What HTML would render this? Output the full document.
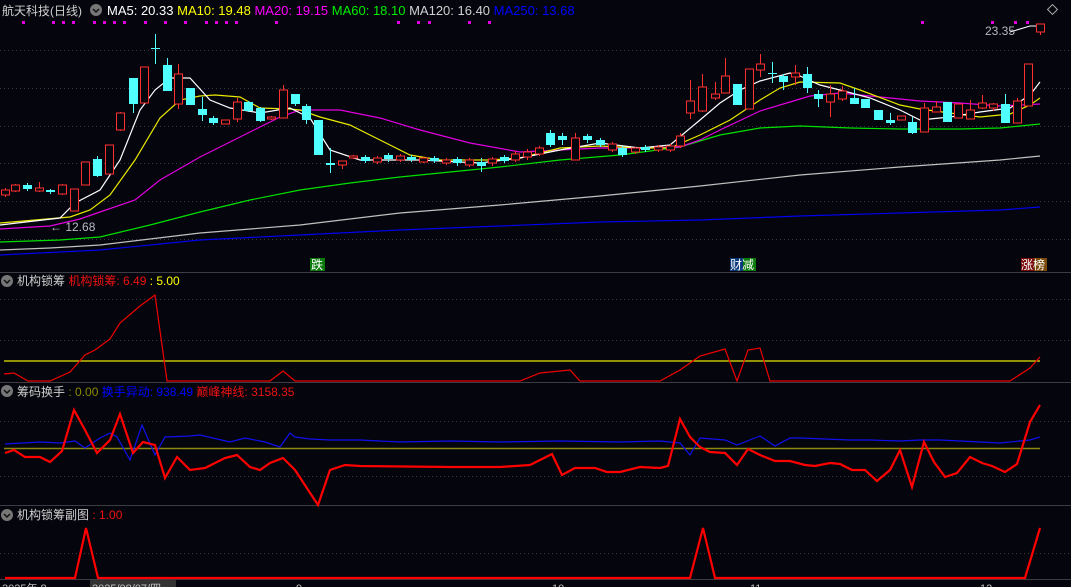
<!DOCTYPE html>
<html><head><meta charset="utf-8"><style>
body{margin:0;background:#05050d;width:1071px;height:587px;overflow:hidden;font-family:"Liberation Sans","Noto Sans CJK SC",sans-serif;}
svg{position:absolute;left:0;top:0}
text{font-family:"Liberation Sans","Noto Sans CJK SC",sans-serif;font-size:12px}
</style></head><body>
<svg id="s" width="1071" height="587" xmlns="http://www.w3.org/2000/svg">
<rect width="1071" height="587" fill="#05050d"/>
<g stroke="#3a3a44" stroke-dasharray="1,3" stroke-width="1">
<line x1="0" y1="50.5" x2="1071" y2="50.5"/><line x1="0" y1="88.5" x2="1071" y2="88.5"/><line x1="0" y1="126.5" x2="1071" y2="126.5"/><line x1="0" y1="163.5" x2="1071" y2="163.5"/><line x1="0" y1="201.5" x2="1071" y2="201.5"/><line x1="0" y1="239.5" x2="1071" y2="239.5"/>
<line x1="0" y1="299.5" x2="1071" y2="299.5"/><line x1="0" y1="340.5" x2="1071" y2="340.5"/>
<line x1="0" y1="421.5" x2="1071" y2="421.5"/><line x1="0" y1="476.5" x2="1071" y2="476.5"/>
<line x1="0" y1="553.5" x2="1071" y2="553.5"/>
</g>
<g stroke="#3c3c44" stroke-width="1">
<line x1="0" y1="272.5" x2="1071" y2="272.5"/><line x1="0" y1="382.5" x2="1071" y2="382.5"/><line x1="0" y1="505.5" x2="1071" y2="505.5"/><line x1="0" y1="579.5" x2="1071" y2="579.5"/>
</g>
<g id="mag" fill="#e000e0"></g>
<g fill="none" stroke-width="1.2">
<polyline stroke="#0000ee" points="0,255 100,250 200,240 300,235 400,230 500,226 600,222 700,220 800,216 900,213 1000,210 1040,207"/>
<polyline stroke="#c0c0c0" points="0,250 50,248 100,245 200,233 300,225 400,213 500,205 600,196 700,186 800,175 900,167 1000,160 1040,156"/>
<polyline stroke="#00e000" points="0,242 60,240 100,237 150,225 200,212 250,200 300,190 350,183 400,177 450,172 500,167 560,160 620,155 680,147 720,135 760,128 800,126 850,128 900,129 960,129 1000,128 1040,124"/>
<polyline stroke="#e000e0" points="0,229 50,226 80,219 100,212 135,200 160,180 200,157 240,137 280,117 300,110 340,110 380,118 420,130 470,143 520,152 560,150 600,148 650,148 680,147 700,140 720,130 760,111 790,102 810,96 840,93 880,97 920,101 960,103 1000,106 1040,104"/>
<polyline stroke="#e8e800" points="0,223 70,217 90,210 110,195 135,160 160,118 180,100 200,96 215,95 240,97 260,108 290,109 300,110 320,117 350,125 380,140 410,155 440,160 490,160 520,158 560,148 600,146 640,148 670,148 700,135 730,120 760,100 780,88 800,82 840,83 860,90 900,105 920,109 950,113 980,117 1010,114 1030,105 1040,98"/>
<polyline stroke="#ffffff" points="0,225 60,218 75,203 100,190 120,160 140,110 155,90 170,78 190,78 210,100 230,108 260,113 290,108 310,118 330,150 360,160 420,160 480,163 520,158 560,150 600,143 640,148 670,145 700,120 720,103 740,90 760,81 790,73 800,76 820,85 840,90 870,98 900,110 920,120 950,117 980,112 1010,108 1030,95 1040,82"/>
</g>
<g id="c"></g>
<polyline fill="none" stroke="#ffffff" points="1010,32 1030,26 1036,26"/>
<text x="985" y="35" fill="#b8b8c8">23.35</text>
<text x="50" y="231" fill="#b8b8c8">← 12.68</text>
<rect x="310" y="258" width="15" height="13" fill="#0a7a0a"/><text x="311" y="269" fill="#fff">跌</text>
<rect x="730" y="258" width="13" height="13" fill="#0a3a7a"/><rect x="743" y="258" width="13" height="13" fill="#0a7a0a"/><text x="730" y="269" fill="#fff">财减</text>
<rect x="1021" y="258" width="13" height="13" fill="#7a0a0a"/><rect x="1034" y="258" width="13" height="13" fill="#7a4a0a"/><text x="1021" y="269" fill="#fff">涨榜</text>
<text x="2" y="15" fill="#d0d0d0" style="font-size:12px">航天科技(日线)</text>
<circle cx="96" cy="10" r="6" fill="#777"/><path d="M93 9l3 3 3-3" stroke="#111" fill="none" stroke-width="1.5"/>
<text x="107" y="15" style="font-size:13px"><tspan fill="#ffffff">MA5: 20.33 </tspan><tspan fill="#ffff00"> MA10: 19.48 </tspan><tspan fill="#ff00ff"> MA20: 19.15 </tspan><tspan fill="#00ee00"> MA60: 18.10 </tspan><tspan fill="#d0d0d0"> MA120: 16.40 </tspan><tspan fill="#0000ff"> MA250: 13.68</tspan></text>
<rect x="1049" y="6" width="7" height="7" transform="rotate(45 1052.5 9.5)" fill="none" stroke="#aaa"/>
<circle cx="7" cy="281" r="6" fill="#777"/><path d="M4 280l3 3 3-3" stroke="#111" fill="none" stroke-width="1.5"/>
<text x="17" y="285" fill="#d0d0d0">机构锁筹 <tspan fill="#ee1111">机构锁筹: 6.49</tspan><tspan fill="#ffff00"> : 5.00</tspan></text>
<line x1="4" y1="361" x2="1040" y2="361" stroke="#e8e800" stroke-width="1.2"/>
<polyline fill="none" stroke="#ee0000" stroke-width="1.2" points="4,374 14,373 28,381 50,381 70,372 85,355 95,350 110,339 120,323 140,306 155,295 167,381 270,381 283,371 295,381 520,381 540,373 570,370 580,381 660,381 680,370 700,356 725,349 737,381 748,350 760,348 770,381 1010,381 1030,368 1040,357"/>
<circle cx="7" cy="391" r="6" fill="#777"/><path d="M4 390l3 3 3-3" stroke="#111" fill="none" stroke-width="1.5"/>
<text x="17" y="396" fill="#d0d0d0">筹码换手 <tspan fill="#8a8a00">: 0.00</tspan><tspan fill="#0000ff"> 换手异动: 938.49</tspan><tspan fill="#ee1111"> 巅峰神线: 3158.35</tspan></text>
<line x1="4" y1="448.5" x2="1040" y2="448.5" stroke="#8a8a10" stroke-width="1.5"/>
<polyline fill="none" stroke="#1010ee" stroke-width="1.2" points="5,444 40,442 60,443 75,441 85,448 100,438 110,433 117,437 130,460 142,425 155,455 165,437 190,436 200,435 230,442 245,438 265,442 280,447 290,433 295,437 310,439 330,440 360,440 400,442 450,441 500,442 560,441 620,442 660,441 680,443 690,455 700,438 725,440 737,445 760,436 775,446 790,438 800,438 850,440 870,440 900,441 920,440 940,440 960,441 1000,443 1030,440 1040,437"/>
<polyline fill="none" stroke="#ff0000" stroke-width="2.2" points="5,453 14,450 25,457 40,457 50,462 62,451 74,410 85,430 97,453 110,440 120,414 133,453 143,442 155,445 165,478 177,457 190,470 205,468 225,458 237,455 250,467 260,470 270,463 283,458 295,470 318,505 330,470 345,465 360,466 450,467 500,467 530,465 552,454 562,475 575,468 595,468 607,472 620,472 640,467 660,468 668,466 680,419 690,437 700,447 710,452 725,453 737,465 748,449 760,455 775,461 790,461 805,465 815,466 830,463 840,464 852,470 865,470 877,481 890,470 900,450 912,487 924,442 934,462 945,477 957,473 970,457 982,463 992,466 1005,472 1017,464 1030,422 1040,405"/>
<circle cx="7" cy="515" r="6" fill="#777"/><path d="M4 514l3 3 3-3" stroke="#111" fill="none" stroke-width="1.5"/>
<text x="17" y="519" fill="#d0d0d0">机构锁筹副图 <tspan fill="#ee1111">: 1.00</tspan></text>
<polyline fill="none" stroke="#ff0000" stroke-width="2.2" points="5,578 75,578 86,528 98,578 690,578 703,528 715,578 1025,578 1040,528"/>
<g fill="#c0c0c0">
<text x="2" y="592" style="font-size:11px">2025年 8</text>
<rect x="90" y="580" width="86" height="8" fill="#333"/><text x="92" y="592" style="font-size:11px">2025/08/07/四</text>
<text x="296" y="592" style="font-size:11px">9</text><text x="552" y="592" style="font-size:11px">10</text><text x="750" y="592" style="font-size:11px">11</text><text x="980" y="592" style="font-size:11px">12</text>
</g>
</svg>
<script>
var ns="http://www.w3.org/2000/svg";
var g=document.getElementById('c');
var C=[[5,190,195,188,197,'r'],[15,185,191,184,192,'r'],[27,185,189,183,191,'c'],[39,188,191,182,192,'r'],[50,190,192,189,194,'c'],[62,185,194,184,195,'r'],[74,189,211,189,211,'r'],[85,162,185,162,185,'r'],[97,159,176,156,177,'c'],[109,145,174,145,174,'r'],[120,113,130,112,131,'r'],[133,78,104,78,113,'c'],[144,67,103,67,103,'r'],[155,48,49,34,64,'c'],[167,65,91,58,91,'c'],[178,74,104,64,109,'r'],[190,88,105,88,105,'c'],[202,109,115,97,121,'c'],[213,118,123,116,125,'c'],[225,120,124,120,124,'r'],[237,102,119,98,122,'r'],[248,102,111,101,112,'c'],[260,108,121,107,122,'c'],[271,117,119,116,120,'r'],[283,90,118,85,118,'r'],[295,94,104,94,106,'c'],[306,106,120,104,124,'c'],[318,120,155,120,155,'c'],[330,163,165,148,173,'c'],[342,161,165,161,169,'r'],[353,156,158,155,159,'r'],
[365,157,161,155,163,'c'],[377,158,162,156,164,'r'],[388,155,159,153,162,'c'],[400,156,160,154,162,'r'],[411,157,160,155,162,'c'],[423,158,162,157,163,'r'],[434,158,161,156,163,'c'],[446,160,163,158,165,'r'],[457,159,163,157,166,'c'],[469,160,165,158,167,'r'],[481,162,166,158,172,'c'],[492,159,163,157,166,'r'],[504,157,161,155,163,'c'],[515,154,160,151,162,'r'],[527,152,157,149,160,'r'],[539,148,154,146,156,'r'],[550,133,145,130,147,'c'],[562,136,140,133,145,'c'],[575,138,160,133,160,'r'],[587,136,140,134,143,'c'],[600,140,145,138,147,'c'],[612,144,150,142,152,'r'],[622,148,155,146,157,'c'],[635,148,152,147,154,'r'],[645,147,150,145,152,'c'],[658,147,150,145,152,'r'],[670,146,150,144,152,'r'],[680,136,146,133,148,'r'],
[690,101,113,80,119,'r'],[702,87,111,74,112,'r'],[715,94,98,82,100,'r'],[725,76,93,58,93,'r'],[737,84,105,84,105,'c'],[749,69,109,69,109,'r'],[760,64,70,54,77,'r'],[772,73,74,62,83,'c'],[783,76,82,74,90,'c'],[795,73,77,65,85,'r'],[807,74,88,67,93,'c'],[818,94,99,90,107,'c'],[830,94,102,85,117,'r'],[842,91,99,86,101,'r'],[854,98,104,88,104,'c'],[865,99,108,99,108,'c'],[878,110,120,110,120,'c'],[890,120,123,113,125,'c'],[901,116,120,116,120,'r'],[912,122,133,117,134,'c'],[924,108,132,103,132,'r'],[936,107,112,101,112,'r'],[947,102,122,102,122,'c'],[958,104,118,104,118,'r'],[970,110,119,100,119,'r'],[982,103,108,95,109,'r'],[993,104,108,103,111,'r'],[1005,104,123,94,123,'c'],[1017,101,123,98,123,'r'],[1028,64,106,64,106,'r'],[1040,24,32,24,35,'r']];
C.forEach(function(k){var x=k[0],o=k[1],c=k[2],h=k[3],l=k[4],red=k[5]=='r';var col=red?'#ff3030':'#50ffff';
var w=document.createElementNS(ns,'line');w.setAttribute('x1',x+.5);w.setAttribute('x2',x+.5);w.setAttribute('y1',h);w.setAttribute('y2',l);w.setAttribute('stroke',col);g.appendChild(w);
var r=document.createElementNS(ns,'rect');r.setAttribute('x',x-4);r.setAttribute('y',o);r.setAttribute('width',9);r.setAttribute('height',Math.max(1,c-o));
if(red){r.setAttribute('fill','#05050d');r.setAttribute('stroke',col);r.setAttribute('x',x-3.5);r.setAttribute('width',8);}else r.setAttribute('fill',col);g.appendChild(r);});
var m=document.getElementById('mag');[23,53,63,73,94,104,114,124,145,165,185,206,216,226,236,276,398,418,429,469,489,922,992,1015,1027].forEach(function(x){var r=document.createElementNS(ns,'rect');r.setAttribute('x',x-1);r.setAttribute('y',21);r.setAttribute('width',3);r.setAttribute('height',3);m.appendChild(r);});
</script>
</body></html>
